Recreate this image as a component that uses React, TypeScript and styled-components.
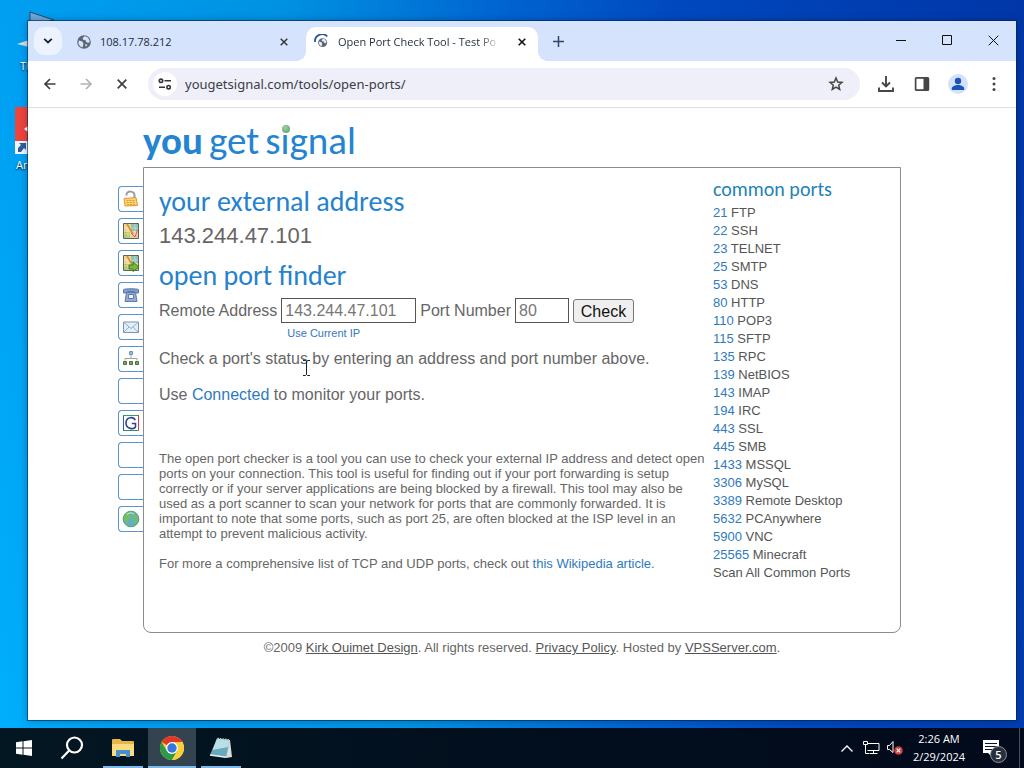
import React from "react";
import styled, { createGlobalStyle, css } from "styled-components";

const uiFont = `"Open Sans", "Noto Sans", sans-serif`;
const bodyFont = `"Liberation Sans", Arial, sans-serif`;
const titleFont = `Calibri, Carlito, Lato, sans-serif`;

const GlobalStyle = createGlobalStyle`
  * { box-sizing: border-box; }
  body { margin: 0; font-family: ${bodyFont}; }
  button { font: inherit; border: 0; padding: 0; background: none; color: inherit; }
  h1, h2, h3, p, ul { margin: 0; padding: 0; font-weight: 400; }
  ul { list-style: none; }
  svg { display: block; }
`;

/* ---------- desktop ---------- */

const Desktop = styled.div`
  min-height: 100vh;
  display: flex;
  flex-direction: column;
  background: linear-gradient(80deg, #00b0fc 0%, #009ff2 12%, #0092e2 36%, #0062d0 56%, #0048be 70%, #0036a8 100%);
`;

const Workspace = styled.div`
  flex: 1;
  display: flex;
  position: relative;
  padding: 21px 8px 8px 28px;
`;

const DesktopIcon = styled.div<{ $top: number }>`
  position: absolute;
  left: 12px;
  top: ${(p) => p.$top}px;
  width: 48px;
  color: #fff;
  font: 11px/16px ${uiFont};
  text-shadow: 0 1px 2px #000;
`;

const IconLabel = styled.span<{ $indent: number }>`
  display: block;
  padding-left: ${(p) => p.$indent}px;
`;

const BrowserWindow = styled.section`
  flex: 1;
  min-width: 0;
  position: relative;
  display: flex;
  flex-direction: column;
  background: #fff;
  box-shadow: 0 0 0 1px rgba(0, 40, 70, 0.6), 0 0 8px rgba(0, 20, 70, 0.35);
`;

/* ---------- browser chrome ---------- */

const TabStrip = styled.header`
  height: 40px;
  display: flex;
  align-items: center;
  background: #d5e3fd;
  color: #1f2a3c;
  font: 11px/16px ${uiFont};
`;

const TabSearch = styled.button`
  width: 28px;
  height: 28px;
  margin: 0 8px 0 6px;
  display: grid;
  place-items: center;
  border-radius: 10px;
  background: #edf3fe;
`;

const Tab = styled.div<{ $active?: boolean }>`
  width: 228px;
  height: 34px;
  margin-right: 8px;
  padding: 0 6px 4px 7px;
  display: flex;
  align-items: center;
  align-self: flex-end;
  gap: 9px;
  ${(p) =>
    p.$active &&
    css`
      position: relative;
      width: 232px;
      margin-right: 0;
      padding: 0 8px 4px;
      background: #fff;
      border-radius: 10px 10px 0 0;
      &::before,
      &::after {
        content: "";
        position: absolute;
        bottom: 0;
        width: 10px;
        height: 10px;
      }
      &::before {
        left: -10px;
        background: radial-gradient(circle at 0 0, transparent 10px, #fff 10px);
      }
      &::after {
        right: -10px;
        background: radial-gradient(circle at 100% 0, transparent 10px, #fff 10px);
      }
    `}
`;

const TabTitle = styled.span<{ $fade?: boolean }>`
  flex: 1;
  white-space: nowrap;
  ${(p) =>
    p.$fade &&
    css`
      mask-image: linear-gradient(90deg, #000 84%, transparent 98%);
    `}
`;

const IconButton = styled.button<{ $size?: number }>`
  flex: none;
  width: ${(p) => p.$size ?? 28}px;
  height: ${(p) => p.$size ?? 28}px;
  display: grid;
  place-items: center;
`;

const WindowButtons = styled.div`
  margin-left: auto;
  align-self: flex-start;
  display: flex;
`;

const CaptionButton = styled.button`
  width: 46px;
  height: 38px;
  display: grid;
  place-items: center;
`;

const Toolbar = styled.div`
  height: 47px;
  display: flex;
  align-items: center;
  gap: 8px;
  padding: 0 8px;
  border-bottom: 1px solid #dcdfe4;
  background: #fff;
  color: #3c4043;
`;

const AddressBar = styled.div`
  flex: 1;
  min-width: 0;
  height: 32px;
  margin: 0 4px;
  padding: 0 10px 0 5px;
  display: flex;
  align-items: center;
  gap: 8px;
  border-radius: 16px;
  background: #eeeff8;
`;

const SiteInfo = styled.button`
  width: 24px;
  height: 24px;
  display: grid;
  place-items: center;
  border-radius: 12px;
  background: #fff;
`;

const UrlInput = styled.input`
  flex: 1;
  min-width: 0;
  border: 0;
  padding: 0;
  background: none;
  color: #3a3d45;
  font: 13px/20px "Noto Sans", "Open Sans", sans-serif;
`;

/* ---------- web page ---------- */

const Site = styled.main`
  flex: 1;
  padding: 12px 16px 0;
  display: grid;
  grid-template-columns: 26px minmax(0, 758px) 26px;
  grid-template-rows: 47px auto 32px;
  justify-content: center;
  align-content: start;
  color: #666;
`;

const Logo = styled.h1`
  grid-column: 2;
  display: flex;
  gap: 6px;
  color: #2484d2;
  font: 39px/42px ${titleFont};
`;

const DottedI = styled.span`
  position: relative;
  &::after {
    content: "";
    position: absolute;
    left: 1px;
    top: 8px;
    width: 8px;
    height: 8px;
    border-radius: 50%;
    background: radial-gradient(circle at 40% 35%, #a6d0a6, #4f9a63);
  }
`;

const ToolTabs = styled.nav`
  grid-column: 1;
  padding: 19px 0 0 1px;
  display: flex;
  flex-direction: column;
  gap: 6px;
`;

const ToolTab = styled.a`
  height: 26px;
  display: grid;
  place-items: center;
  border: 1px solid #5b93d0;
  border-right: 0;
  border-radius: 4px 0 0 4px;
  background: #fff;
`;

const Panel = styled.div`
  grid-column: 2;
  min-height: 466px;
  padding: 0 15px;
  display: grid;
  grid-template-columns: minmax(0, 1fr) 172px;
  column-gap: 8px;
  border: 1px solid #8c8c8c;
  border-radius: 0 0 8px 8px;
`;

const MainColumn = styled.div`
  padding-top: 18px;
`;

const Title = styled.h2`
  color: #2482ce;
  font: 28px/32px ${titleFont};
`;

const ExternalIp = styled.p`
  padding: 2px 0 8px;
  font-size: 22px;
  line-height: 32px;
`;

const PortForm = styled.form`
  display: grid;
  grid-template-columns: auto 135px auto 54px auto;
  justify-content: start;
  align-items: center;
  column-gap: 4px;
  padding-top: 6px;
  font-size: 16px;
  line-height: 24px;
`;

const TextField = styled.input`
  width: 100%;
  height: 25px;
  padding: 1px 3px;
  border: 1px solid #555;
  border-radius: 0;
  background: #fff;
  color: #777;
  font: 16px/20px ${bodyFont};
`;

const CheckButton = styled.button`
  height: 24px;
  width: 61px;
  border: 1px solid #777;
  border-radius: 3px;
  background: #efefef;
  color: #111;
`;

const CurrentIp = styled.a`
  grid-column: 2;
  padding-left: 6px;
  color: #2f78bd;
  font-size: 11px;
  line-height: 20px;
  text-decoration: none;
`;

const Messages = styled.div`
  padding-top: 6px;
  display: grid;
  gap: 16px;
  font-size: 16px;
  line-height: 20px;
`;

const Link = styled.a<{ $underline?: boolean }>`
  color: ${(p) => (p.$underline ? "#555" : "#2f7ac0")};
  text-decoration: ${(p) => (p.$underline ? "underline" : "none")};
`;

const TextCursor = styled.span`
  position: relative;
  svg {
    position: absolute;
    left: -6px;
    top: 10px;
  }
`;

const About = styled.div`
  padding-top: 46px;
  display: grid;
  gap: 15px;
  font-size: 13px;
  line-height: 15px;
`;

const PortColumn = styled.aside`
  padding-top: 7px;
`;

const PortHeading = styled.h3`
  color: #2482b8;
  font: 20px/28px ${titleFont};
`;

const PortList = styled.ul`
  padding-top: 1px;
  color: #555;
  font-size: 13px;
  line-height: 18px;
`;

const Footer = styled.footer`
  grid-column: 2;
  padding-top: 6px;
  text-align: center;
  font-size: 13px;
  line-height: 18px;
`;

/* ---------- taskbar ---------- */

const Taskbar = styled.footer`
  height: 40px;
  display: flex;
  align-items: stretch;
  background: linear-gradient(90deg, #031722, #020f1e 50%, #020a1c);
  color: #fff;
  font: 11px/18px ${uiFont};
`;

const TaskButton = styled.button<{ $state?: "open" | "active" }>`
  width: 48px;
  padding-top: ${(p) => (p.$state ? 2 : 0)}px;
  display: grid;
  place-items: center;
  ${(p) =>
    p.$state &&
    css`
      width: ${p.$state === "active" ? 48 : 40}px;
      margin-right: 5px;
      border-bottom: 2px solid #7db8ea;
      background: ${p.$state === "active" ? "#33434f" : "none"};
    `}
`;

const TaskGroup = styled.div`
  display: flex;
  margin-left: 7px;
`;

const Tray = styled.div`
  margin-left: auto;
  display: flex;
  align-items: center;
`;

const TrayButton = styled.button`
  width: 24px;
  height: 40px;
  display: grid;
  place-items: center;
`;

const Clock = styled.time`
  width: 64px;
  text-align: center;
`;

const Notifications = styled.button`
  position: relative;
  width: 48px;
  padding-left: 11px;
`;

const Badge = styled.span`
  position: absolute;
  left: 19px;
  top: 7px;
  width: 17px;
  height: 17px;
  border: 1px solid #8d939c;
  border-radius: 50%;
  background: #28303d;
  font-size: 11px;
  font-weight: 600;
  line-height: 15px;
  text-align: center;
`;

const ShowDesktop = styled.button`
  width: 5px;
  height: 40px;
  border-left: 1px solid #44505e;
`;

/* ---------- drawings ---------- */

const Cross = ({ size, width = 1, color = "#333" }: { size: number; width?: number; color?: string }) => (
  <svg width={size} height={size} viewBox={`0 0 ${size} ${size}`} fill="none" stroke={color} strokeWidth={width}>
    <path d={`M.7.7L${size - 0.7} ${size - 0.7}M${size - 0.7}.7L.7 ${size - 0.7}`} />
  </svg>
);

const Globe = () => (
  <svg width="14" height="14" viewBox="0 0 14 14">
    <circle cx="7" cy="7" r="6.8" fill="#5c6573" />
    <path d="M2 5.4l3.4 1.2 1 2.1-.8 3.9C3 12 1.3 9.6 1.4 7zM7.4 1.3l-1.8 2 .8 1.6 2.3.4.5 2 2.1.5 1.4-.6C12.7 4 10.5 1.5 7.4 1.3zM8 9.2l2.6.2-1.9 2.6z" fill="#d5e3fd" />
  </svg>
);

const LoadingGlobe = () => (
  <svg width="15" height="16" viewBox="0 0 15 16">
    <g transform="translate(4 4) scale(.66)">
      <circle cx="7" cy="7" r="6.8" fill="#5c6573" />
      <path d="M2 5.4l3.4 1.2 1 2.1-.8 3.9C3 12 1.3 9.6 1.4 7zM7.4 1.3l-1.8 2 .8 1.6 2.3.4.5 2 2.1.5 1.4-.6C12.7 4 10.5 1.5 7.4 1.3z" fill="#e8edf5" />
    </g>
    <path d="M1 8A7.200 7.200 0 0 1 13.200 2.300" fill="none" stroke="#2b56a8" strokeWidth="1.8" />
  </svg>
);

const Arrow = ({ flip, color }: { flip?: boolean; color: string }) => (
  <svg width="14" height="14" viewBox="0 0 14 14" fill="none" stroke={color} strokeWidth="1.7">
    <path d={flip ? "M1.500 7h10M7 2L12 7 7 12" : "M12.500 7H2M7 2L2 7 7 12"} />
  </svg>
);

const Tune = () => (
  <svg width="14" height="12" viewBox="0 0 14 12" fill="none" stroke="#303338" strokeWidth="1.6">
    <circle cx="3" cy="2.8" r="1.7" />
    <path d="M6.500 2.800H13M1 9.200h6" />
    <circle cx="10.6" cy="9.2" r="1.7" />
  </svg>
);

const Star = () => (
  <svg width="16" height="16" viewBox="0 0 16 16" fill="none" stroke="#444746" strokeWidth="1.5">
    <path d="M8 2l1.700 4 4.300.4-3.300 2.800 1 4.300L8 11.200l-3.700 2.300 1-4.300L2 6.400l4.300-.4z" />
  </svg>
);

const Download = () => (
  <svg width="18" height="18" viewBox="0 0 18 18" fill="none" stroke="#444746" strokeWidth="1.9">
    <path d="M9 1v10.500M5 7.500L9 11.500l4-4M2 12.500V16h14v-3.500" />
  </svg>
);

const SidePanel = () => (
  <svg width="16" height="16" viewBox="0 0 16 16">
    <rect x="1.6" y="1.8" width="12.8" height="12.4" rx="1" fill="none" stroke="#444746" strokeWidth="1.7" />
    <path d="M9.500 1.500H14.500v13H9.500z" fill="#444746" />
  </svg>
);

const Avatar = () => (
  <svg width="20" height="20" viewBox="0 0 20 20">
    <circle cx="10" cy="10" r="10" fill="#d3e1fc" />
    <circle cx="10" cy="7" r="3.2" fill="#1b54b8" />
    <path d="M3.800 16v-1.500c0-2.200 3.500-3.500 6.200-3.500s6.200 1.300 6.200 3.500V16z" fill="#1b54b8" />
  </svg>
);

const Menu = () => (
  <svg width="4" height="16" viewBox="0 0 4 16" fill="#444746">
    <circle cx="2" cy="2.5" r="1.5" />
    <circle cx="2" cy="8" r="1.5" />
    <circle cx="2" cy="13.5" r="1.5" />
  </svg>
);

const Padlock = () => (
  <svg width="18" height="18" viewBox="0 0 18 18">
    <path d="M4.500 5.500V4.500c0-4 8-4 8 1V8" fill="none" stroke="#9a9aa2" strokeWidth="2" />
    <path d="M2 8.500l12-1 1.500 8-12.500.5z" fill="#fbd478" stroke="#dc9a2c" />
    <path d="M4.500 10.500h9M4.500 12.500h9M5 14.500h9" stroke="#e79a2c" strokeDasharray="2 1" />
  </svg>
);

const MapIcon = ({ arrow }: { arrow?: boolean }) => (
  <svg width="18" height="18" viewBox="0 0 18 18">
    <path d="M1.500 1.500h15v15h-15z" fill="#ecd795" stroke="#5a6658" />
    <path d="M9 2h7v7H9z" fill="#8cc3b5" />
    <path d="M2 10h6v6H2z" fill="#b6c86f" />
    <path d="M10 10h6v6h-6z" fill="#e8c4b0" />
    <path d="M2 6h14M2 12h14M6 2v14M13 2v14" stroke="#fff" strokeOpacity=".35" />
    <path d="M5 2l6 10" stroke="#e08b1d" strokeWidth="1.5" />
    {arrow ? (
      <path d="M7 11h4V8l6 5-6 4.500V15H7z" fill="#77b83b" stroke="#3c7b26" />
    ) : (
      <path d="M9 11l4 4 2.500-7" fill="none" stroke="#d8604a" />
    )}
  </svg>
);

const Phone = () => (
  <svg width="18" height="18" viewBox="0 0 18 18" stroke="#5d7bab">
    <path d="M1.500 7V3.500c2-1 13-1 15 0V7h-4V5.500h-7V7z" fill="#7d9dcc" />
    <path d="M4.500 6.500h9l1.500 9H3z" fill="#8fabd6" />
    <path d="M6.500 8.500h5v4h-5z" fill="#eef4fc" />
  </svg>
);

const Mail = () => (
  <svg width="18" height="18" viewBox="0 0 18 18" stroke="#7b95ab">
    <path d="M1.500 4h15v10.500h-15z" fill="#e3eefa" />
    <path d="M2 4.500l7 6 7-6M2 14l5-5M16 14l-5-5" fill="none" stroke="#91b1cc" />
  </svg>
);

const Network = () => (
  <svg width="18" height="18" viewBox="0 0 18 18">
    <path d="M9 5v3M3 10.500V8.500h12v2" fill="none" stroke="#a3a39c" />
    <path d="M7.500 1.500h3v3h-3z" fill="#9dbbe0" stroke="#6f94c4" />
    <path d="M1.500 11.500h3v3h-3zM7.500 11.500h3v3h-3zM13.500 11.500h3v3h-3z" fill="#7fa567" stroke="#4c6f3d" />
  </svg>
);

const GIcon = () => (
  <svg width="18" height="18" viewBox="0 0 18 18" fill="none">
    <path d="M1.500 16.500v-15" stroke="#3159b5" />
    <path d="M1 1.500h15.500" stroke="#3b9c62" />
    <path d="M16.500 1v15.500" stroke="#cc3d3d" />
    <path d="M1 16.500h15.500" stroke="#3b8a62" />
    <path d="M13.200 6.200C11.700 2.500 4 2.500 4 9s8 6.500 9.500 4V9.500H9.800" stroke="#2b4490" strokeWidth="1.6" />
  </svg>
);

const EarthIcon = () => (
  <svg width="18" height="18" viewBox="0 0 18 18">
    <circle cx="9" cy="9" r="7.8" fill="#5fb0c0" stroke="#5f9f6a" />
    <path d="M3 5c2-3 5-3.500 6-3l-1 3 2 2-3 2-1 4C3 12 1 9 3 5zM11 3c3 1 5 4 4.500 7L13 14l-2-3 1-3z" fill="#76bd63" />
    <path d="M5 4.500c2-2 5-2 7-.5" stroke="#d6efd8" fill="none" />
  </svg>
);

const WindowsLogo = () => (
  <svg width="16" height="16" viewBox="0 0 16 16" fill="#fff">
    <path d="M0 2.200l6.500-.9v6.200H0zM7.500 1.200L16 0v7.500H7.500zM0 8.500h6.500v6.200L0 13.800zM7.500 8.500H16V16l-8.500-1.200z" />
  </svg>
);

const SearchIcon = () => (
  <svg width="24" height="24" viewBox="0 0 24 24" fill="none" stroke="#fff" strokeWidth="2.2">
    <circle cx="14.5" cy="9" r="7.5" />
    <path d="M9.200 14.600L1.500 22.500" />
  </svg>
);

const FolderIcon = () => (
  <svg width="22" height="20" viewBox="0 0 22 20">
    <path d="M0 2q0-1 1-1h7l2 2h11q1 0 1 1v14H0z" fill="#e9b44a" />
    <path d="M0 6h22v12H0z" fill="#fbdb7c" />
    <path d="M4 19v-7h14v7h-4v-3H8v3z" fill="#4591cf" />
  </svg>
);

const ChromeLogo = () => (
  <svg width="24" height="24" viewBox="0 0 24 24">
    <circle cx="12" cy="12" r="12" fill="#f9cf3b" />
    <path d="M12 12L1.600 6A12 12 0 0 1 22.400 6z" fill="#e2382c" />
    <path d="M1.600 6A12 12 0 0 0 12 24l5.200-9L12 12 6.800 15z" fill="#30984a" />
    <path d="M22.400 6H12v6l5.200 3L12 24A12 12 0 0 0 22.400 6z" fill="#f9cf3b" />
    <circle cx="12" cy="12" r="5.9" fill="#fff" />
    <circle cx="12" cy="12" r="4.7" fill="#3477e0" />
  </svg>
);

const NotepadIcon = () => (
  <svg width="24" height="22" viewBox="0 0 24 22">
    <path d="M17 3l4 0 2 17-6 1z" fill="#dcdedb" />
    <path d="M8 1.500L21 3l-4 17.500L1 18z" fill="#6aa9bb" />
    <path d="M8 1.500L21 3l-1.700 7L3.500 13z" fill="#b9dfe7" />
    <path d="M1 18l16 2.300" stroke="#e8f4f5" strokeWidth="1.4" />
    <path d="M8.500 1.500l12.500 1.500" stroke="#b9c4c8" strokeWidth="1.6" strokeDasharray="1.5 1" />
  </svg>
);

/* ---------- data ---------- */

const tools: [string, React.ReactNode][] = [
  ["Port forwarding tester", <Padlock />],
  ["Network location", <MapIcon />],
  ["Visual trace route", <MapIcon arrow />],
  ["Phone number location", <Phone />],
  ["Email tool", <Mail />],
  ["Reverse IP domain check", <Network />],
  ["WHOIS lookup", null],
  ["Search tool", <GIcon />],
  ["Tool archive", null],
  ["Tool list", null],
  ["What is my IP", <EarthIcon />],
];

const ports: [number, string][] = [
  [21, "FTP"], [22, "SSH"], [23, "TELNET"], [25, "SMTP"], [53, "DNS"],
  [80, "HTTP"], [110, "POP3"], [115, "SFTP"], [135, "RPC"], [139, "NetBIOS"],
  [143, "IMAP"], [194, "IRC"], [443, "SSL"], [445, "SMB"], [1433, "MSSQL"],
  [3306, "MySQL"], [3389, "Remote Desktop"], [5632, "PCAnywhere"], [5900, "VNC"],
  [25565, "Minecraft"],
];

export default function App() {
  return (
    <Desktop>
      <GlobalStyle />
      <Workspace>
        <DesktopIcon $top={10}>
          <svg width="48" height="48" viewBox="0 0 48 48">
            <path d="M18 2l24 8-24 6z" fill="#6ea8d8" stroke="#2a4766" />
            <path d="M5 34l12-4v7z" fill="#d5dde4" />
          </svg>
          <IconLabel $indent={8}>Th</IconLabel>
        </DesktopIcon>
        <DesktopIcon $top={107}>
          <svg width="48" height="50" viewBox="0 0 48 50">
            <path d="M3 0h40v46H3z" fill="#ef443b" />
            <path d="M12 22l12-9v18z" fill="#fff" />
            <path d="M3 34h13v13H3z" fill="#f4f7fa" />
            <path d="M6 45v-4l3-3-2-2h7v7l-2-2-3 4z" fill="#2b5f9e" />
          </svg>
          <IconLabel $indent={4}>An</IconLabel>
        </DesktopIcon>

        <BrowserWindow>
          <TabStrip>
            <TabSearch aria-label="Search tabs">
              <svg width="10" height="6" viewBox="0 0 10 6" fill="none" stroke="#1f2329" strokeWidth="1.8">
                <path d="M1.200.8L5 4.500 8.800.8" />
              </svg>
            </TabSearch>
            <Tab>
              <Globe />
              <TabTitle>108.17.78.212</TabTitle>
              <IconButton $size={16} aria-label="Close tab"><Cross size={8} width={1.4} /></IconButton>
            </Tab>
            <Tab $active>
              <LoadingGlobe />
              <TabTitle $fade>Open Port Check Tool - Test Po</TabTitle>
              <IconButton $size={16} aria-label="Close tab"><Cross size={8} width={1.6} color="#111" /></IconButton>
            </Tab>
            <IconButton $size={40} aria-label="New tab">
              <svg width="11" height="11" viewBox="0 0 11 11" stroke="#2f4668" strokeWidth="1.5">
                <path d="M5.500 0v11M0 5.500h11" />
              </svg>
            </IconButton>
            <WindowButtons>
              <CaptionButton aria-label="Minimize">
                <svg width="10" height="10" viewBox="0 0 10 10"><path d="M0 5.500h10" stroke="#111" /></svg>
              </CaptionButton>
              <CaptionButton aria-label="Maximize">
                <svg width="10" height="10" viewBox="0 0 10 10"><path d="M.5.5h9v9h-9z" stroke="#111" fill="none" /></svg>
              </CaptionButton>
              <CaptionButton aria-label="Close"><Cross size={11} color="#111" /></CaptionButton>
            </WindowButtons>
          </TabStrip>

          <Toolbar>
            <IconButton aria-label="Back"><Arrow color="#3c4043" /></IconButton>
            <IconButton aria-label="Forward"><Arrow flip color="#b0b3b6" /></IconButton>
            <IconButton aria-label="Stop"><Cross size={10} width={1.7} color="#3c4043" /></IconButton>
            <AddressBar>
              <SiteInfo aria-label="Site information"><Tune /></SiteInfo>
              <UrlInput aria-label="Address" defaultValue="yougetsignal.com/tools/open-ports/" />
              <IconButton aria-label="Bookmark"><Star /></IconButton>
            </AddressBar>
            <IconButton aria-label="Downloads"><Download /></IconButton>
            <IconButton aria-label="Side panel"><SidePanel /></IconButton>
            <IconButton aria-label="Profile"><Avatar /></IconButton>
            <IconButton aria-label="Menu"><Menu /></IconButton>
          </Toolbar>

          <Site>
            <Logo>
              <b>you</b>
              <span>get</span>
              <span>s<DottedI>i</DottedI>gnal</span>
            </Logo>
            <ToolTabs>
              {tools.map(([name, icon]) => (
                <ToolTab key={name} href="#" aria-label={name}>{icon}</ToolTab>
              ))}
            </ToolTabs>
            <Panel>
              <MainColumn>
                <Title>your external address</Title>
                <ExternalIp>143.244.47.101</ExternalIp>
                <Title>open port finder</Title>
                <PortForm onSubmit={(e) => e.preventDefault()}>
                  <label htmlFor="remote">Remote Address</label>
                  <TextField id="remote" defaultValue="143.244.47.101" />
                  <label htmlFor="port">Port Number</label>
                  <TextField id="port" defaultValue="80" />
                  <CheckButton>Check</CheckButton>
                  <CurrentIp href="#">Use Current IP</CurrentIp>
                </PortForm>
                <Messages>
                  <p>
                    Check a port's status
                    <TextCursor>
                      <svg width="9" height="16" viewBox="0 0 9 16" fill="none" stroke="#222">
                        <path d="M1 .5h2.500l1 1 1-1H8M4.500 1.500v13M1 15.500h2.500l1-1 1 1H8" />
                      </svg>
                    </TextCursor>{" "}
                    by entering an address and port number above.
                  </p>
                  <p>
                    Use <Link href="#">Connected</Link> to monitor your ports.
                  </p>
                </Messages>
                <About>
                  <p>
                    The open port checker is a tool you can use to check your external IP address and detect open
                    ports on your connection. This tool is useful for finding out if your port forwarding is setup
                    correctly or if your server applications are being blocked by a firewall. This tool may also be
                    used as a port scanner to scan your network for ports that are commonly forwarded. It is
                    important to note that some ports, such as port 25, are often blocked at the ISP level in an
                    attempt to prevent malicious activity.
                  </p>
                  <p>
                    For more a comprehensive list of TCP and UDP ports, check out{" "}
                    <Link href="#">this Wikipedia article</Link>.
                  </p>
                </About>
              </MainColumn>
              <PortColumn>
                <PortHeading>common ports</PortHeading>
                <PortList>
                  {ports.map(([port, name]) => (
                    <li key={port}><Link href="#">{port}</Link> {name}</li>
                  ))}
                  <li>Scan All Common Ports</li>
                </PortList>
              </PortColumn>
            </Panel>
            <Footer>
              ©2009 <Link $underline href="#">Kirk Ouimet Design</Link>. All rights reserved.{" "}
              <Link $underline href="#">Privacy Policy</Link>. Hosted by{" "}
              <Link $underline href="#">VPSServer.com</Link>.
            </Footer>
          </Site>
        </BrowserWindow>
      </Workspace>

      <Taskbar>
        <TaskButton aria-label="Start"><WindowsLogo /></TaskButton>
        <TaskButton aria-label="Search"><SearchIcon /></TaskButton>
        <TaskGroup>
          <TaskButton $state="open" aria-label="File Explorer"><FolderIcon /></TaskButton>
          <TaskButton $state="active" aria-label="Chrome"><ChromeLogo /></TaskButton>
          <TaskButton $state="open" aria-label="Notepad"><NotepadIcon /></TaskButton>
        </TaskGroup>
        <Tray>
          <TrayButton aria-label="Show hidden icons">
            <svg width="12" height="7" viewBox="0 0 12 7" fill="none" stroke="#fff" strokeWidth="1.3"><path d="M.5 6.500L6 1l5.500 5.500" /></svg>
          </TrayButton>
          <TrayButton aria-label="Network">
            <svg width="17" height="14" viewBox="0 0 17 14" fill="none" stroke="#fff">
              <path d="M5 2.500h11v7H4.500M10.500 9.500v3M6.500 12.500h8M.5.500h4v3h-4zM2.500 3.500v9H6" />
            </svg>
          </TrayButton>
          <TrayButton aria-label="Volume muted">
            <svg width="16" height="14" viewBox="0 0 16 14" fill="none">
              <path d="M.5 4.500h2l3.500-4v11l-3.500-3h-2z" stroke="#fff" />
              <circle cx="11.5" cy="9.5" r="4.3" fill="#d23b3b" />
              <path d="M9.700 7.700l3.600 3.600M13.300 7.700l-3.600 3.600" stroke="#fff" strokeWidth="1.2" />
            </svg>
          </TrayButton>
          <Clock>2:26 AM<br />2/29/2024</Clock>
          <Notifications aria-label="Notifications">
            <svg width="18" height="18" viewBox="0 0 18 18">
              <path d="M1 1h16v13H9v3l-3-3H1z" fill="#fff" />
              <path d="M3 4.500h12M3 7.500h12M3 10.500h8" stroke="#0a1424" />
            </svg>
            <Badge>5</Badge>
          </Notifications>
          <ShowDesktop aria-label="Show desktop" />
        </Tray>
      </Taskbar>
    </Desktop>
  );
}
